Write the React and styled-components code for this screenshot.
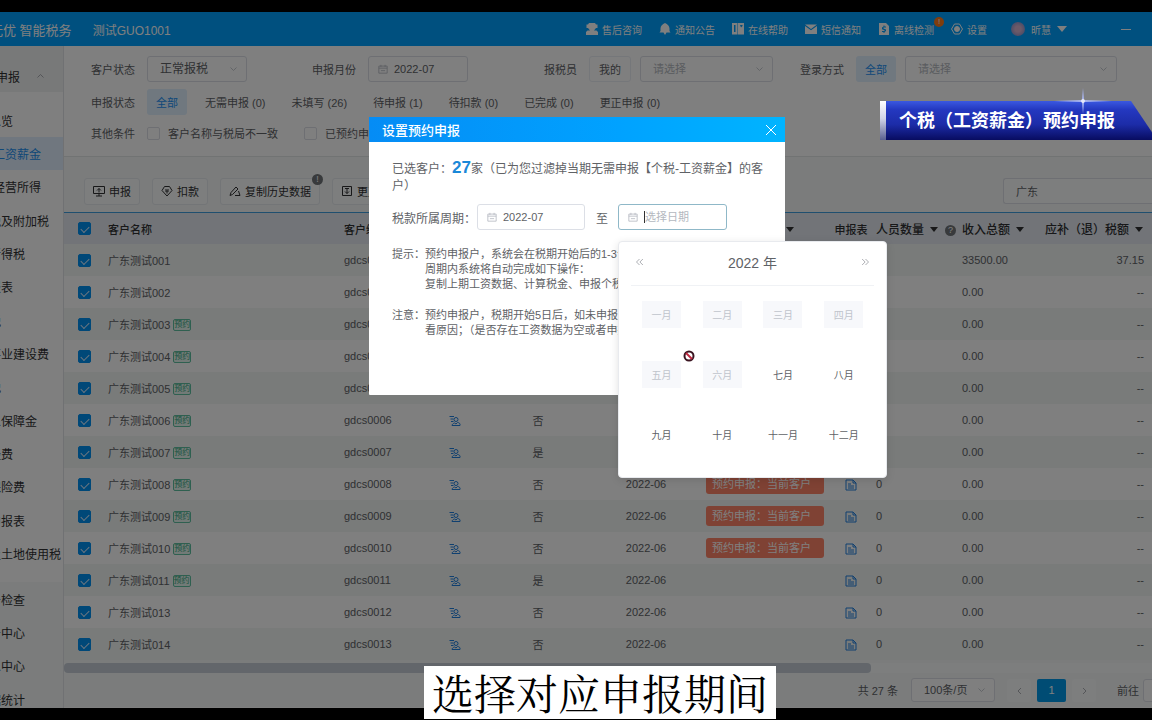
import React from 'react'
import styled, { createGlobalStyle, css } from 'styled-components'

const GlobalStyle = createGlobalStyle`
    * {
        box-sizing: border-box;
    }
    body {
        margin: 0;
        background: #000;
        color: #606266;
        font-family: "Liberation Sans", "Noto Sans CJK SC", sans-serif;
        font-size: 11px;
    }
    button, input, select {
        font: inherit;
        color: inherit;
        margin: 0;
    }
    button {
        padding: 0;
        border: 0;
        background: none;
        white-space: nowrap;
    }
`

const Page = styled.div`
    height: 100vh;
    padding: 12px 0;
    display: flex;
    position: relative;
    overflow: hidden;
`
const Screen = styled.div`
    flex: 1;
    min-width: 0;
    display: flex;
    flex-direction: column;
    position: relative;
    overflow: hidden;
    background: #f6f9f9;
`

/* header */
const Header = styled.header`
    height: 34px;
    flex: none;
    display: flex;
    align-items: center;
    padding-right: 21px;
    background: #00a0ff;
    color: #fff;
    font-size: 10px;
    white-space: nowrap;
`
const Brand = styled.div`
    margin-left: -10px;
    font-size: 13px;
`
const Account = styled.div`
    margin: 0 auto 0 21px;
    font-size: 12px;
`
const HeaderLinks = styled.nav`
    display: flex;
    align-items: center;
    gap: 17px;
`
const HeaderLink = styled.a`
    display: flex;
    align-items: center;
    gap: 4px;
    position: relative;
    color: #fff;
    text-decoration: none;
`
const HeaderBadge = styled.span`
    position: absolute;
    top: -5px;
    right: -10px;
    width: 10px;
    height: 10px;
    border-radius: 50%;
    background: #ff7a1a;
    font-size: 8px;
    line-height: 10px;
    text-align: center;
`
const UserMenu = styled.button`
    display: flex;
    align-items: center;
    gap: 6px;
    margin-left: 24px;
    color: #fff;
`
const Avatar = styled.span`
    width: 14px;
    height: 14px;
    border-radius: 50%;
    background: radial-gradient(#d8b4d0 30%, #6d88d0);
`
const Minimize = styled.button`
    width: 10px;
    height: 10px;
    margin-left: 54px;
    display: flex;
    align-items: center;
    &::before {
        content: '';
        flex: 1;
        height: 1px;
        background: #fff;
    }
`
const Caret = styled.i`
    display: inline-block;
    border: solid transparent;
    border-width: ${p => p.$large ? '6px 5px 0' : '5px 4px 0'};
    border-top-color: currentColor;
    color: ${p => p.$large ? '#fff' : '#303133'};
`

/* sidebar */
const Body = styled.div`
    flex: 1;
    min-height: 0;
    display: flex;
`
const Sidebar = styled.aside`
    width: 64px;
    flex: none;
    overflow: hidden;
    border-right: 1px solid #e0e3e6;
    color: #303133;
    font-size: 12px;
    white-space: nowrap;
`
const MenuHeading = styled.button`
    width: 100%;
    height: 46px;
    padding: 14px 18px 0 0;
    display: flex;
    justify-content: space-between;
    align-items: center;
    background: #f0f3f3;
    span {
        margin-left: -28px;
    }
    svg {
        width: 9px;
        color: #909399;
    }
`
const MenuList = styled.ul`
    margin: 0;
    padding: ${p => p.$open ? '11px 0 12px' : '0'};
    list-style: none;
    background: ${p => p.$open ? '#fff' : 'transparent'};
    li {
        height: 33px;
    }
    li:nth-child(3n + 1) {
        height: 34px;
    }
`
const MenuLink = styled.a`
    display: flex;
    align-items: center;
    height: 100%;
    color: ${p => p.$active ? '#2090f0' : 'inherit'};
    background: ${p => p.$active ? '#e0efff' : 'transparent'};
    text-decoration: none;
    span {
        margin-left: ${p => p.$sub ? '-35px' : '-23px'};
    }
`

/* filters */
const Main = styled.main`
    flex: 1;
    min-width: 0;
    display: flex;
    flex-direction: column;
`
const Filters = styled.section`
    display: flex;
    flex-direction: column;
    gap: 7px;
    height: 111px;
    padding: 10px 35px 0 27px;
    background: #fff;
    border-bottom: 1px solid #e2e6e6;
`
const FilterGrid = styled.div`
    display: grid;
    grid-template-columns: 221px 232px 256px 1fr;
`
const Field = styled.div`
    display: flex;
    align-items: center;
    gap: 9px;
    height: ${p => p.$low ? '22px' : '26px'};
    white-space: nowrap;
    > label:first-child, > span {
        min-width: ${p => p.$short ? '36px' : '47px'};
    }
`
const SelectBox = styled.div`
    width: ${p => p.$width || 'auto'};
    flex: ${p => p.$width ? 'none' : '1'};
    height: ${p => p.$height || '26px'};
    display: flex;
    align-items: center;
    padding-right: 8px;
    border: 1px solid #dcdfe6;
    border-radius: 3px;
    background: #fff;
    select {
        flex: 1;
        min-width: 0;
        padding: 0 0 0 12px;
        border: 0;
        outline: 0;
        appearance: none;
        background: none;
        font-size: ${p => p.$size || '11px'};
        color: ${p => p.$empty ? '#b4b8c0' : 'inherit'};
    }
    svg {
        width: 9px;
        flex: none;
        color: #b4b8c0;
    }
`
const DateBox = styled.div`
    width: ${p => p.$width};
    height: 26px;
    display: flex;
    align-items: center;
    gap: 6px;
    padding-left: 9px;
    border: 1px solid ${p => p.$focused ? '#8fb8c8' : '#dcdfe6'};
    border-radius: 3px;
    background: #fff;
    position: relative;
    > svg {
        width: 10px;
        flex: none;
        color: #b4b8c0;
    }
    > input {
        width: 100%;
        min-width: 0;
        padding: 0;
        border: 0;
        outline: 0;
        background: none;
    }
    > input::placeholder {
        color: #b4b8c0;
    }
`
const TextCaret = styled.i`
    width: 1px;
    height: 12px;
    margin-right: -6px;
    flex: none;
    background: #303133;
`
const Chip = styled.button`
    height: 26px;
    padding: 0 9px;
    border-radius: 3px;
    ${p => p.$on && css`
        background: #e0f0ff;
        color: #1c90f3;
    `}
    ${p => p.$outlined && css`
        border: 1px solid #ebeef5;
    `}
`
const StatusTabs = styled.div`
    display: flex;
    align-items: center;
    gap: 26px;
    button:first-child {
        margin-right: -8px;
    }
`
const CheckLabel = styled.label`
    display: flex;
    align-items: center;
    gap: 8px;
    margin-right: 17px;
`
const Checkbox = styled.input.attrs({ type: 'checkbox' })`
    appearance: none;
    display: block;
    width: 13px;
    height: 13px;
    border: 1px solid #dcdfe6;
    border-radius: 2px;
    background: #fff;
    &:checked {
        border-color: #0090f0;
        background: #0090f0;
    }
    &:checked::after {
        content: '';
        display: block;
        width: 7px;
        height: 4px;
        margin: 3px auto;
        border: solid #d8ecff;
        border-width: 0 0 1px 1px;
        transform: rotate(-45deg);
    }
`

/* toolbar */
const Toolbar = styled.div`
    display: flex;
    align-items: center;
    gap: 12px;
    height: 56px;
    padding: 13px 0 0 20px;
    border-bottom: 1px solid #3f9fdf;
`
const ToolButton = styled.button`
    display: flex;
    align-items: center;
    gap: 4px;
    height: 27px;
    padding: 0 8px;
    position: relative;
    border: 1px solid #e6eaee;
    border-radius: 3px;
    background: #fbfdfd;
    color: #303133;
`
const InfoDot = styled.span`
    width: 11px;
    height: 11px;
    border-radius: 50%;
    background: #707478;
    color: #fff;
    font-size: 9px;
    line-height: 11px;
    text-align: center;
    ${p => p.$corner ? css`
        position: absolute;
        top: -5px;
        right: -4px;
    ` : css`
        display: inline-block;
    `}
`
const SearchInput = styled.input`
    width: 149px;
    height: 26px;
    margin-left: auto;
    padding: 0 12px;
    border: 1px solid #dcdfe6;
    border-right: 0;
    border-radius: 3px 0 0 3px;
    background: #fbfdfd;
`

/* table */
const TableArea = styled.div`
    flex: 1;
    min-height: 0;
    overflow: hidden;
`
const Table = styled.table`
    width: 100%;
    table-layout: fixed;
    border-collapse: collapse;
    white-space: nowrap;
    th {
        height: 31px;
        padding: 0 8px;
        background: #e4e9f0;
        color: #303133;
        font-weight: 500;
    }
    td {
        height: 32px;
        padding: 0 8px;
    }
    tbody tr:nth-child(odd) {
        background: #f2f6f5;
    }
    tbody tr:nth-child(even) {
        background: #fff;
    }
    input {
        margin-left: 6px;
    }
`
const Th = styled.th`
    font-size: ${p => p.$big ? '12px' : '11px'};
    text-align: ${p => p.$center ? 'center' : 'left'};
    && {
        ${p => p.$tight && css`padding: 0;`}
    }
    i {
        margin-left: 6px;
        vertical-align: 2px;
    }
    span {
        margin-left: 7px;
        vertical-align: 1px;
    }
`
const Td = styled.td`
    text-align: ${p => p.$align || 'left'};
    svg {
        display: inline-block;
        vertical-align: middle;
        color: #2080e0;
    }
`
const BookedTag = styled.span`
    display: inline-block;
    margin-left: 3px;
    border: 1px solid #5fc0a0;
    border-radius: 2px;
    background: #e4f5ee;
    color: #35a880;
    font-size: 8px;
    line-height: 10px;
    vertical-align: 2px;
`
const StateTag = styled.span`
    display: block;
    width: 118px;
    height: 20px;
    margin: 0 auto;
    padding: 0 6px;
    border-radius: 3px;
    background: #ff8468;
    color: #fff;
    line-height: 20px;
    text-align: left;
`
const ScrollTrack = styled.div`
    height: 10px;
    flex: none;
    background: #fafcfc;
`
const ScrollThumb = styled.div`
    width: 807px;
    height: 10px;
    border-radius: 4px;
    background: #c6cdd6;
`
const Pager = styled.footer`
    height: 35px;
    flex: none;
    display: flex;
    align-items: center;
    justify-content: flex-end;
    border-bottom: 1px solid #fff;
`
const PageButtons = styled.div`
    display: flex;
    gap: 6px;
    margin: 0 21px 0 12px;
`
const PageButton = styled.button`
    width: ${p => p.$current ? '29px' : '24px'};
    height: 23px;
    border-radius: 2px;
    background: ${p => p.$current ? '#0099e8' : '#fafcfc'};
    color: ${p => p.$current ? '#fff' : '#909399'};
    svg {
        width: 9px;
        vertical-align: middle;
    }
`
const GotoLabel = styled.label`
    display: flex;
    align-items: center;
    gap: 4px;
    margin-right: -31px;
    input {
        width: 40px;
        height: 23px;
        border: 1px solid #dcdfe6;
        border-radius: 3px;
        background: #fff;
    }
`
const Total = styled.span`
    margin-right: 13px;
`

/* dialog */
const Mask = styled.div`
    position: absolute;
    inset: 0;
    padding: 105px 0 0 2px;
    display: flex;
    justify-content: center;
    align-items: flex-start;
    background: rgba(0, 0, 0, 0.5);
`
const Dialog = styled.section`
    width: 416px;
    border-radius: 1px;
    background: #fff;
`
const DialogHeader = styled.header`
    height: 25px;
    padding: 0 8px 0 13px;
    display: flex;
    align-items: center;
    justify-content: space-between;
    background: linear-gradient(90deg, #058cf5, #00a2ff 60%, #00b4ff);
    color: #fff;
    h2 {
        margin: 0;
        font-size: 13px;
        font-weight: 500;
    }
    svg {
        display: block;
    }
`
const DialogBody = styled.div`
    min-height: 253px;
    padding: 18px 16px 16px 23px;
    font-size: 12px;
`
const Summary = styled.p`
    margin: 0 0 9px;
    line-height: 17px;
    strong {
        color: #1a88d8;
        font-size: 17px;
        line-height: 16px;
    }
`
const Range = styled.div`
    display: flex;
    align-items: center;
    margin-bottom: 17px;
    font-size: 11px;
    > label, > span {
        font-size: 12px;
    }
    > label {
        width: 85px;
    }
    > span {
        margin: 0 10px 0 11px;
    }
`
const Notes = styled.dl`
    margin: 0;
    display: grid;
    grid-template-columns: 33px 1fr;
    row-gap: 16px;
    font-size: 11px;
    line-height: 15px;
    white-space: nowrap;
    dd {
        margin: 0;
    }
`
const MonthPanel = styled.div`
    position: absolute;
    top: 36px;
    left: -1px;
    width: 269px;
    height: 237px;
    padding: 0 12px;
    border: 1px solid #e8eaee;
    border-radius: 4px;
    background: #fff;
    box-shadow: 0 2px 8px rgba(0, 0, 0, 0.12);
`
const PanelHeader = styled.div`
    height: 44px;
    padding: 0 4px 4px;
    display: flex;
    align-items: center;
    justify-content: space-between;
    border-bottom: 1px solid #f0f2f5;
    font-size: 14px;
    svg {
        display: block;
        width: 9px;
        color: #909399;
    }
`
const Months = styled.div`
    display: grid;
    grid-template-columns: repeat(4, 1fr);
    grid-auto-rows: 60px;
    place-items: center;
`
const Month = styled.button`
    width: 39px;
    height: 27px;
    margin-bottom: 4px;
    font-size: 10px;
    &:disabled {
        background: #f7f8fb;
        color: #c0c4cc;
    }
`
const BlockedCursor = styled.svg`
    position: absolute;
    top: 108px;
    left: 64px;
    width: 12px;
    height: 12px;
`

/* titles over the page */
const Banner = styled.div`
    position: absolute;
    top: 101px;
    right: 0;
    display: flex;
    height: 39px;
`
const BannerEdge = styled.div`
    width: 6px;
    background: linear-gradient(#fff, #d0d4e8 45%, #5a6090);
`
const BannerText = styled.div`
    padding: 1px 37px 0 13px;
    background: linear-gradient(#3a58e0, #2438c0 22%, #1c2ca8 60%, #080c60);
    clip-path: polygon(0 0, calc(100% - 21px) 0, 100% 80%, 100% 100%, 0 100%);
    color: #fff;
    font-size: 18px;
    font-weight: 600;
    line-height: 38px;
`
const Sparkle = styled.svg`
    position: absolute;
    top: -13px;
    right: 40px;
    width: 58px;
    height: 26px;
`
const Caption = styled.div`
    position: absolute;
    bottom: 1px;
    left: 50%;
    margin-left: -152px;
    padding: 0 8px;
    background: #fff;
    color: #000;
    font-family: "Noto Serif CJK SC", "Noto Serif SC", "Liberation Serif", serif;
    font-size: 42px;
    line-height: 53px;
    white-space: nowrap;
`

const Icon = ({ d, size = 12, fill, children, ...rest }) => (
    <svg viewBox="0 0 12 12" width={size} height={size} fill={fill ? 'currentColor' : 'none'}
        stroke={fill ? 'none' : 'currentColor'} aria-hidden="true" {...rest}>
        {d && <path d={d} />}
        {children}
    </svg>
)

const ChevronDown = () => <Icon d="M2 4l4 4 4-4" />
const CalendarIcon = () => <Icon d="M1 2.500h10v8.500H1zM1 5h10M3.500 1v2.500M8.500 1v2.500M3.500 8h5" />

const headerLinks = [
    { label: '售后咨询', icon: <Icon fill d="M3 0h6l1 1.500h1.500V5H10L8 7.500h2.500L12 9v3H0V9l1.500-1.500H4L2 5H.5V1.500H2z" /> },
    { label: '通知公告', icon: <Icon fill d="M6 0c2.500 1 4.500 3 4.500 5.500V8l1 1.500H7.500L6 12l-1.500-2.500h-4l1-1.500V5.500C1.500 3 3.500 1 6 0z" /> },
    { label: '在线帮助', icon: <Icon fill d="M0 0h5.500v11.500H0zM6 0h6v11.500H6zM2 2v7h1.500V2zM8 2l1 2.500L10.500 3V2z" fillRule="evenodd" /> },
    { label: '短信通知', icon: <Icon fill d="M0 1.500h12L6 6zM0 3l6 4.200L12 3v8H0z" /> },
    { label: '离线检测', badge: '!', icon: <Icon fill fillRule="evenodd" d="M1 0h7l3 3v9H1zM5.500 2.500v1L4 4.500v1.700l2.500 1V8H4v1h1.500v1h1V9L8 8V6.500L5.500 5.400V4.500H8v-1H6.500v-1z" /> },
    {
        label: '设置',
        icon: (
            <Icon>
                <path d="M3.500 1h5L11.500 6l-3 5h-5L.5 6z" />
                <circle cx="6" cy="6" r="2.500" fill="currentColor" />
            </Icon>
        ),
    },
]

const taxMenu = [
    '申报总览', '个税-工资薪金', '个税-经营所得', '增值税及附加税', '企业所得税', '财务报表', '印花税',
    '文化事业建设费', '消费税', '残疾人保障金', '工会经费', '社会保险费', '通用申报表', '房产及土地使用税',
]
const otherMenu = ['税务检查', '任务中心', '消息中心', '数据统计']

const statusTabs = ['全部', '无需申报 (0)', '未填写 (26)', '待申报 (1)', '待扣款 (0)', '已完成 (0)', '更正申报 (0)']

const tools = [
    { label: '申报', icon: <Icon d="M.5 1.500h11v7H.5zM3 11h6M6 8.500V11M6 7.500V3.500M4 5.500l2-2 2 2" /> },
    { label: '扣款', icon: <Icon d="M3.500 1.500h5L11 5.500 6 11 1 5.500zM4.500 4L6 5.500 7.500 4M4 6h4M6 6v2.500" /> },
    { label: '复制历史数据', info: true, icon: <Icon d="M1 10.500l1-3L7 2l2 2-5.500 5.500zM6 10.500h5L9.500 6" /> },
    { label: '更正申报', icon: <Icon d="M1.500 1.500h9v9h-9zM6 3.500v5M4 6.500l2 2 2-2M4 3.500h4" /> },
]

const clients = [
    { name: '001', code: '0001', no: '否', income: '33500.00', tax: '37.15' },
    { name: '002', code: '0002', no: '否' },
    { name: '003', code: '0003', no: '否', booked: true },
    { name: '004', code: '0004', no: '否', booked: true },
    { name: '005', code: '0005', no: '否', booked: true },
    { name: '006', code: '0006', no: '否', booked: true },
    { name: '007', code: '0007', no: '是', booked: true },
    { name: '008', code: '0008', no: '否', booked: true, tagged: true },
    { name: '009', code: '0009', no: '否', booked: true, tagged: true },
    { name: '010', code: '0010', no: '否', booked: true, tagged: true },
    { name: '011', code: '0011', no: '是', booked: true },
    { name: '013', code: '0012', no: '否' },
    { name: '014', code: '0013', no: '否' },
]

const columns = [36, 236, 94, 50, 116, 100, 138, 34, 86, 83]

const months = ['一月', '二月', '三月', '四月', '五月', '六月', '七月', '八月', '九月', '十月', '十一月', '十二月']

const ClientRow = ({ client }) => (
    <tr>
        <Td><Checkbox defaultChecked aria-label={`选择 ${client.name}`} /></Td>
        <Td>广东测试{client.name}{client.booked && <BookedTag>预约</BookedTag>}</Td>
        <Td>gdcs{client.code}</Td>
        <Td $align="center">
            <Icon d="M.5 1.500h4.500M1.500 4h3M7 2.500a2 2 0 1 1 0 4 2 2 0 0 1 0-4M2 6.500h2.500M3 10.500h8c.5-2-1-3-2.500-3L7 9 5.500 8C4 8.500 3 9.500 3 10.500z" />
        </Td>
        <Td $align="center">{client.no}</Td>
        <Td $align="center">2022-06</Td>
        <Td $align="center">{client.tagged && <StateTag>预约申报：当前客户</StateTag>}</Td>
        <Td $align="center">
            <Icon d="M1 1h7l3 3v7H1zM8 1v3h3M3 5h3M3 7h6M3 9h6" />
        </Td>
        <Td>0</Td>
        <Td>{client.income || '0.00'}</Td>
        <Td $align="right">{client.tax || '--'}</Td>
    </tr>
)

const MonthPicker = () => (
    <MonthPanel>
        <PanelHeader>
            <button aria-label="上一年"><Icon d="M6 2L2 6l4 4M10.500 2l-4 4 4 4" /></button>
            <span>2022 年</span>
            <button aria-label="下一年"><Icon d="M1.500 2l4 4-4 4M6 2l4 4-4 4" /></button>
        </PanelHeader>
        <Months>
            {months.map((month, i) => <Month key={month} disabled={i < 6}>{month}</Month>)}
        </Months>
        <BlockedCursor viewBox="0 0 12 12" aria-hidden="true">
            <circle cx="6" cy="6" r="4.500" fill="#fff" stroke="#3a1420" strokeWidth="2" />
            <path d="M3 3l6 6" stroke="#c02840" strokeWidth="2" />
        </BlockedCursor>
    </MonthPanel>
)

const BookingDialog = () => (
    <Dialog role="dialog" aria-labelledby="booking-title">
        <DialogHeader>
            <h2 id="booking-title">设置预约申报</h2>
            <button aria-label="关闭"><Icon d="M1 1l10 10M11 1L1 11" /></button>
        </DialogHeader>
        <DialogBody>
            <Summary>
                已选客户：<strong>27</strong>家（已为您过滤掉当期无需申报【个税-工资薪金】的客户）
            </Summary>
            <Range>
                <label htmlFor="period-from">税款所属周期：</label>
                <DateBox $width="108px">
                    <CalendarIcon />
                    <input id="period-from" defaultValue="2022-07" />
                </DateBox>
                <span>至</span>
                <DateBox $width="109px" $focused>
                    <CalendarIcon />
                    <TextCaret />
                    <input placeholder="选择日期" aria-label="结束日期" />
                    <MonthPicker />
                </DateBox>
            </Range>
            <Notes>
                <dt>提示：</dt>
                <dd>
                    预约申报户，系统会在税期开始后的1-3个工作日内，在<br />
                    周期内系统将自动完成如下操作：<br />
                    复制上期工资数据、计算税金、申报个税
                </dd>
                <dt>注意：</dt>
                <dd>
                    预约申报户，税期开始5日后，如未申报成功，请及时查<br />
                    看原因；（是否存在工资数据为空或者申报失败）
                </dd>
            </Notes>
        </DialogBody>
    </Dialog>
)

const App = () => {
    return (
        <Page>
            <GlobalStyle />
            <Screen>
                <Header>
                    <Brand>无优 智能税务</Brand>
                    <Account>测试GUO1001</Account>
                    <HeaderLinks>
                        {headerLinks.map(link => (
                            <HeaderLink key={link.label} href="#">
                                {link.icon}
                                {link.label}
                                {link.badge && <HeaderBadge>{link.badge}</HeaderBadge>}
                            </HeaderLink>
                        ))}
                    </HeaderLinks>
                    <UserMenu><Avatar />昕慧<Caret $large /></UserMenu>
                    <Minimize aria-label="最小化" />
                </Header>
                <Body>
                    <Sidebar>
                        <MenuHeading>
                            <span>纳税申报</span>
                            <Icon d="M2 8l4-4 4 4" />
                        </MenuHeading>
                        <MenuList $open>
                            {taxMenu.map((item, i) => (
                                <li key={item}><MenuLink href="#" $sub $active={i === 1}><span>{item}</span></MenuLink></li>
                            ))}
                        </MenuList>
                        <MenuList>
                            {otherMenu.map(item => (
                                <li key={item}><MenuLink href="#"><span>{item}</span></MenuLink></li>
                            ))}
                        </MenuList>
                    </Sidebar>
                    <Main>
                        <Filters>
                            <FilterGrid>
                                <Field>
                                    <label htmlFor="client-state">客户状态</label>
                                    <SelectBox $width="100px" $size="12px">
                                        <select id="client-state"><option>正常报税</option></select>
                                        <ChevronDown />
                                    </SelectBox>
                                </Field>
                                <Field>
                                    <label htmlFor="month">申报月份</label>
                                    <DateBox $width="100px">
                                        <CalendarIcon />
                                        <input id="month" defaultValue="2022-07" />
                                    </DateBox>
                                </Field>
                                <Field $short>
                                    <label htmlFor="agent">报税员</label>
                                    <Chip $outlined>我的</Chip>
                                    <SelectBox $width="133px" $empty>
                                        <select id="agent"><option>请选择</option></select>
                                        <ChevronDown />
                                    </SelectBox>
                                </Field>
                                <Field>
                                    <label htmlFor="login-type">登录方式</label>
                                    <Chip $on>全部</Chip>
                                    <SelectBox $empty>
                                        <select id="login-type"><option>请选择</option></select>
                                        <ChevronDown />
                                    </SelectBox>
                                </Field>
                            </FilterGrid>
                            <Field>
                                <span>申报状态</span>
                                <StatusTabs>
                                    {statusTabs.map((tab, i) => (
                                        i === 0 ? <Chip key={tab} $on>{tab}</Chip> : <button key={tab}>{tab}</button>
                                    ))}
                                </StatusTabs>
                            </Field>
                            <Field $low>
                                <span>其他条件</span>
                                <CheckLabel><Checkbox />客户名称与税局不一致</CheckLabel>
                                <CheckLabel><Checkbox />已预约申报</CheckLabel>
                            </Field>
                        </Filters>
                        <Toolbar>
                            {tools.map(tool => (
                                <ToolButton key={tool.label}>
                                    {tool.icon}
                                    {tool.label}
                                    {tool.info && <InfoDot $corner>!</InfoDot>}
                                </ToolButton>
                            ))}
                            <SearchInput defaultValue="广东" aria-label="搜索客户" />
                        </Toolbar>
                        <TableArea>
                            <Table>
                                <colgroup>
                                    {columns.map((width, i) => <col key={i} width={width} />)}
                                    <col />
                                </colgroup>
                                <thead>
                                    <tr>
                                        <Th><Checkbox defaultChecked aria-label="全选" /></Th>
                                        <Th>客户名称</Th>
                                        <Th>客户编码</Th>
                                        <Th $center>登录</Th>
                                        <Th $center>零申报</Th>
                                        <Th $center>税期</Th>
                                        <Th $center>申报状态<Caret /></Th>
                                        <Th $tight $center>申报表</Th>
                                        <Th $big>人员数量<Caret /><InfoDot>?</InfoDot></Th>
                                        <Th $big>收入总额<Caret /></Th>
                                        <Th $big>应补（退）税额<Caret /></Th>
                                    </tr>
                                </thead>
                                <tbody>
                                    {clients.map(client => <ClientRow key={client.name} client={client} />)}
                                </tbody>
                            </Table>
                        </TableArea>
                        <ScrollTrack><ScrollThumb /></ScrollTrack>
                        <Pager>
                            <Total>共 27 条</Total>
                            <SelectBox $width="84px" $height="24px">
                                <select aria-label="每页条数"><option>100条/页</option></select>
                                <ChevronDown />
                            </SelectBox>
                            <PageButtons>
                                <PageButton aria-label="上一页"><Icon d="M8 2L4 6l4 4" /></PageButton>
                                <PageButton $current>1</PageButton>
                                <PageButton aria-label="下一页"><Icon d="M4 2l4 4-4 4" /></PageButton>
                            </PageButtons>
                            <GotoLabel>前往<input aria-label="页码" /></GotoLabel>
                        </Pager>
                    </Main>
                </Body>
                <Mask><BookingDialog /></Mask>
            </Screen>
            <Banner>
                <BannerEdge />
                <BannerText>个税（工资薪金）预约申报</BannerText>
                <Sparkle viewBox="0 0 58 26" aria-hidden="true">
                    <path d="M29 0l1 12 28 1-28 1-1 12-1-12-28-1 28-1z" fill="#aab6f0" />
                    <circle cx="29" cy="13" r="2" fill="#fff" opacity="0.7" />
                </Sparkle>
            </Banner>
            <Caption>选择对应申报期间</Caption>
        </Page>
    )
}

export default App
